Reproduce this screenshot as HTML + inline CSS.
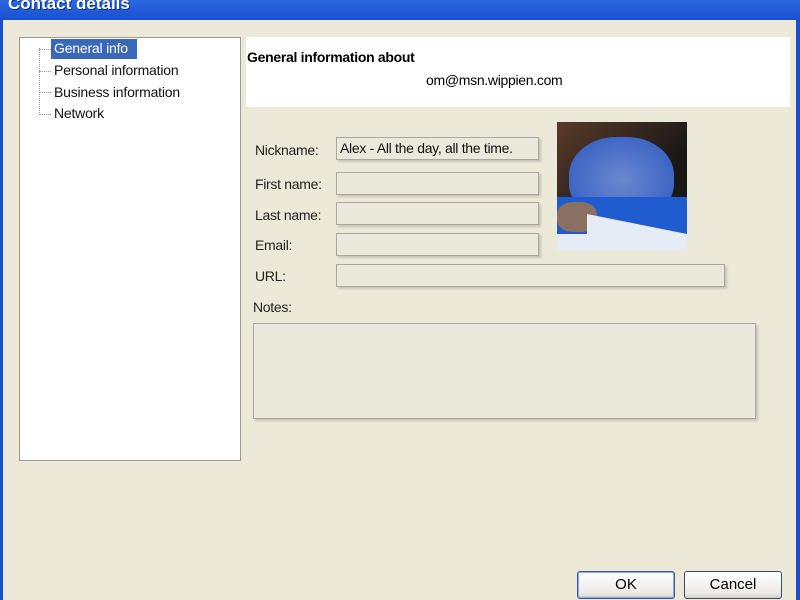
<!DOCTYPE html>
<html><head><style>
body{margin:0;width:800px;height:600px;overflow:hidden;background:#ece9d8;font-family:"Liberation Sans",sans-serif;position:relative}
.a{position:absolute}
.f{position:absolute;border:1px solid #a8a8a0;background:#ebe8dc;box-shadow:2px 2px 2px #c8c5b8;box-sizing:border-box;font-size:14px;padding:2px 3px;color:#111;letter-spacing:-0.3px}
.l{position:absolute;font-size:14px;color:#222;letter-spacing:-0.3px}
.t{position:absolute;font-size:14px;color:#111;left:54px;letter-spacing:-0.2px}
.btn{position:absolute;border:1px solid #3a4a6a;border-radius:3px;background:linear-gradient(#fff,#ecebe6 80%,#d6d0c5);font-size:15px;text-align:center;line-height:26px;box-sizing:border-box;height:28px}
</style></head><body>
<div class="a" style="left:0;top:0;width:800px;height:20px;background:linear-gradient(#2a68e0,#1a50d0)"></div>
<div class="a" style="left:8px;top:-6px;color:#fff;font-weight:bold;font-size:17px;text-shadow:1px 1px #0a2a80">Contact details</div>
<div class="a" style="left:0;top:20px;width:3px;height:580px;background:#1a50d0"></div>
<div class="a" style="left:796px;top:20px;width:4px;height:580px;background:#1a50d0"></div>
<div class="a" style="left:19px;top:37px;width:222px;height:424px;background:#fff;border:1px solid #9a9a90;box-sizing:border-box"></div>
<div class="a" style="left:39px;top:48px;width:0;height:67px;border-left:1px dotted #999"></div>
<div class="a" style="left:39px;top:49px;width:12px;border-top:1px dotted #999"></div>
<div class="a" style="left:39px;top:71px;width:12px;border-top:1px dotted #999"></div>
<div class="a" style="left:39px;top:92px;width:12px;border-top:1px dotted #999"></div>
<div class="a" style="left:39px;top:114px;width:12px;border-top:1px dotted #999"></div>
<div class="a" style="left:51px;top:39px;width:86px;height:20px;background:#3a68b8"></div>
<div class="t" style="top:40px;color:#fff">General info</div>
<div class="t" style="top:62px">Personal information</div>
<div class="t" style="top:84px">Business information</div>
<div class="t" style="top:105px">Network</div>
<div class="a" style="left:246px;top:37px;width:544px;height:70px;background:#fff"></div>
<div class="a" style="left:247px;top:49px;font-weight:bold;font-size:14px;letter-spacing:-0.3px">General information about</div>
<div class="a" style="left:426px;top:72px;font-size:14px;letter-spacing:-0.3px">om@msn.wippien.com</div>
<div class="l" style="left:255px;top:142px">Nickname:</div>
<div class="l" style="left:255px;top:176px">First name:</div>
<div class="l" style="left:255px;top:207px">Last name:</div>
<div class="l" style="left:255px;top:237px">Email:</div>
<div class="l" style="left:255px;top:268px">URL:</div>
<div class="l" style="left:253px;top:299px">Notes:</div>
<div class="f" style="left:336px;top:137px;width:203px;height:23px">Alex - All the day, all the time.</div>
<div class="f" style="left:336px;top:172px;width:203px;height:23px"></div>
<div class="f" style="left:336px;top:202px;width:203px;height:23px"></div>
<div class="f" style="left:336px;top:233px;width:203px;height:23px"></div>
<div class="f" style="left:336px;top:264px;width:389px;height:23px"></div>
<div class="f" style="left:253px;top:323px;width:503px;height:96px"></div>
<div class="a" style="left:557px;top:122px;width:130px;height:129px;overflow:hidden;background:#1e1a18">
<div class="a" style="left:0;top:0;width:130px;height:129px;background:linear-gradient(135deg,#5a3a2a,#1a1816 60%)"></div>
<div class="a" style="left:12px;top:15px;width:105px;height:85px;border-radius:45%;background:radial-gradient(#6a88d0,#2e58c0)"></div>
<div class="a" style="left:0;top:75px;width:130px;height:54px;background:#1f5cd0"></div>
<div class="a" style="left:0;top:80px;width:40px;height:30px;border-radius:40%;background:#8a7060"></div>
<div class="a" style="left:0;top:112px;width:130px;height:17px;background:#e6ecf6"></div>
<div class="a" style="left:30px;top:92px;width:0;height:0;border-left:0 solid transparent;border-right:100px solid transparent;border-bottom:20px solid #e6ecf6"></div>
</div>
<div class="btn" style="left:577px;top:571px;width:98px;border-color:#3a5aa0;box-shadow:inset 0 0 0 1px #8aa8e8">OK</div>
<div class="btn" style="left:684px;top:571px;width:98px">Cancel</div>
</body></html>
